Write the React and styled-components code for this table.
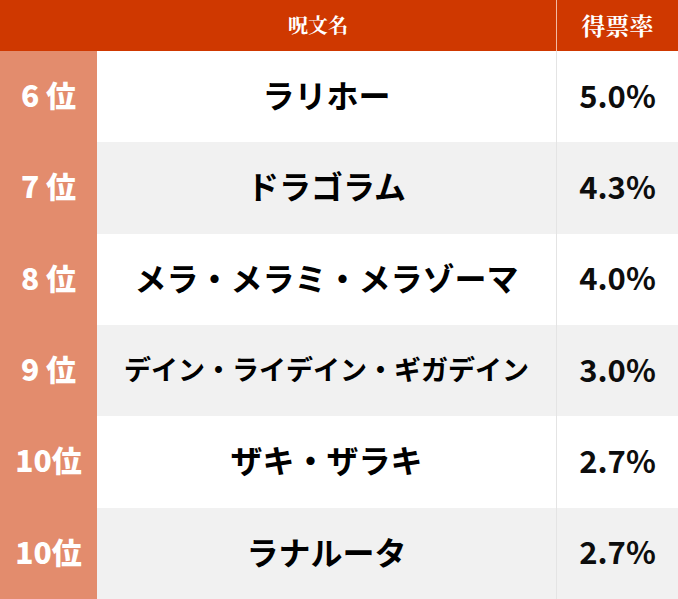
import React from 'react';
import styled, { createGlobalStyle } from 'styled-components';

const GlobalStyle = createGlobalStyle`
  html, body {
    margin: 0;
    padding: 0;
    background: #ffffff;
  }
  body {
    font-family: "Noto Sans CJK JP", "Noto Sans", sans-serif;
  }
`;

const Table = styled.div`
  width: 678px;
  height: 599px;
  display: grid;
  grid-template-columns: 97px 1fr 122px;
  grid-template-rows: 51px repeat(6, 1fr);
`;

const HeadCell = styled.div`
  background: #cf3800;
  color: #ffffff;
  display: flex;
  align-items: center;
  justify-content: center;
  font-family: "Noto Serif CJK JP", "Noto Sans CJK JP", serif;
  font-weight: 700;
  font-size: ${p => p.$size || 20}px;
  padding-right: ${p => p.$shift || 0}px;
  padding-bottom: 2px;
  border-left: ${p => (p.$divider ? '1px solid #f2b9a4' : 'none')};
`;

const RankCell = styled.div`
  background: #e38c6d;
  color: #ffffff;
  display: flex;
  align-items: center;
  justify-content: center;
  font-weight: 900;
  font-size: 30px;
  padding-bottom: 5px;
  white-space: pre;
`;

const NameCell = styled.div`
  background: ${p => (p.$alt ? '#f1f1f1' : '#ffffff')};
  display: flex;
  align-items: center;
  justify-content: center;
  color: #000000;
  font-weight: 700;
  font-size: ${p => p.$size}px;
  padding-bottom: 5px;
  white-space: nowrap;
`;

const RateCell = styled.div`
  background: ${p => (p.$alt ? '#f1f1f1' : '#ffffff')};
  border-left: 1px solid #e4e4e4;
  display: flex;
  align-items: center;
  justify-content: center;
  color: #0d0d0d;
  font-family: "Noto Sans CJK JP", "Noto Sans", sans-serif;
  font-weight: 700;
  font-size: 31px;
  padding-bottom: 5px;
`;

const rows = [
  { rank: '6 ', name: 'ラリホー', rate: '5.0%', size: 32 },
  { rank: '7 ', name: 'ドラゴラム', rate: '4.3%', size: 32 },
  { rank: '8 ', name: 'メラ・メラミ・メラゾーマ', rate: '4.0%', size: 32 },
  { rank: '9 ', name: 'デイン・ライデイン・ギガデイン', rate: '3.0%', size: 27 },
  { rank: '10', name: 'ザキ・ザラキ', rate: '2.7%', size: 32 },
  { rank: '10', name: 'ラナルータ', rate: '2.7%', size: 32 },
];

const App = () => {
  return (
    <>
      <GlobalStyle />
      <Table>
        <HeadCell />
        <HeadCell $shift={17}>呪文名</HeadCell>
        <HeadCell $divider $size={24}>得票率</HeadCell>
        {rows.map((r, i) => (
          <React.Fragment key={i}>
            <RankCell>{r.rank}位</RankCell>
            <NameCell $alt={i % 2 === 1} $size={r.size}>{r.name}</NameCell>
            <RateCell $alt={i % 2 === 1}>{r.rate}</RateCell>
          </React.Fragment>
        ))}
      </Table>
    </>
  );
};

export default App;
